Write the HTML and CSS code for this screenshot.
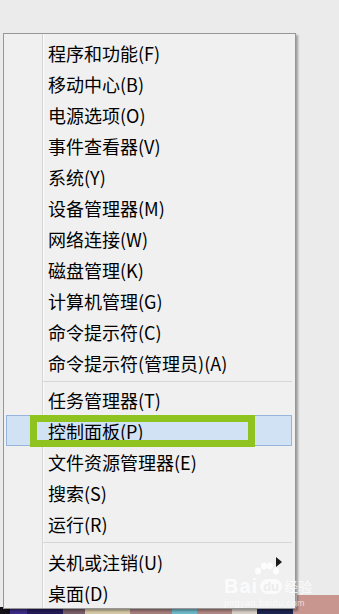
FILE: index.html
```html
<!DOCTYPE html>
<html lang="zh-CN">
<head>
<meta charset="utf-8">
<title>Win+X 菜单</title>
<link rel="stylesheet" href="styles.css">
</head>
<body>
<div class="desktop">
  <div class="desk-fill"></div>
  <div class="desk-corner"><div class="pink-block"></div></div>
  <div class="taskbar">
    <span class="seg s1"></span><span class="seg s2"></span><span class="seg s3"></span><span class="seg s4"></span><span class="seg s5"></span><span class="seg s6"></span><span class="seg s7"></span><span class="seg s8"></span><span class="seg s9"></span><span class="seg s10"></span><span class="seg s11"></span>
  </div>

  <div class="menu">
    <div class="item">程序和功能(F)</div>
    <div class="item">移动中心(B)</div>
    <div class="item">电源选项(O)</div>
    <div class="item">事件查看器(V)</div>
    <div class="item">系统(Y)</div>
    <div class="item">设备管理器(M)</div>
    <div class="item">网络连接(W)</div>
    <div class="item">磁盘管理(K)</div>
    <div class="item">计算机管理(G)</div>
    <div class="item">命令提示符(C)</div>
    <div class="item">命令提示符(管理员)(A)</div>
    <div class="sep sep-a"></div>
    <div class="item">任务管理器(T)</div>
    <div class="item item-hover">控制面板(P)<span class="mark"></span></div>
    <div class="item">文件资源管理器(E)</div>
    <div class="item">搜索(S)</div>
    <div class="item">运行(R)</div>
    <div class="sep sep-b"></div>
    <div class="item item-sub">关机或注销(U)<span class="arrow"></span></div>
    <div class="item">桌面(D)</div>
  </div>

  <div class="watermark">
    <svg class="paw" width="26" height="14" viewBox="0 0 26 14">
      <ellipse cx="4" cy="9" rx="3" ry="3.5" fill="rgba(255,255,255,0.85)"/>
      <ellipse cx="10" cy="4" rx="3" ry="3.5" fill="rgba(255,255,255,0.85)"/>
      <ellipse cx="16" cy="4" rx="3" ry="3.5" fill="rgba(255,255,255,0.85)"/>
      <ellipse cx="22" cy="9" rx="3" ry="3.5" fill="rgba(255,255,255,0.85)"/>
    </svg>
    <div class="wm-line"><span class="wm-bai">Bai</span><span class="wm-du">du</span><span class="wm-jy">经验</span></div>
    <div class="wm-url">jingyan.baidu.com</div>
  </div>
</div>
</body>
</html>
```

FILE: styles.css
```css
html, body {
  margin: 0;
  padding: 0;
}
body {
  width: 339px;
  height: 614px;
  overflow: hidden;
  font-family: "Noto Sans CJK SC", "Noto Sans", sans-serif;
}
.desktop {
  position: relative;
  width: 339px;
  height: 614px;
  display: flex;
  flex-direction: column;
  background: #ebebeb;
}
.desk-fill {
  flex: 1;
}
.desk-corner {
  display: flex;
  justify-content: flex-end;
}
.pink-block {
  width: 42px;
  height: 12px;
  background: #c9958f;
}
.taskbar {
  height: 7px;
  display: flex;
}
.seg { display: block; height: 100%; }
.s1 { width: 10px; background: #141018; }
.s2 { width: 17px; background: #3b2b86; }
.s3 { width: 36px; background: #241a5a; }
.s4 { width: 22px; background: #7a5f68; }
.s5 { width: 45px; background: #d6c9a6; }
.s6 { width: 42px; background: #a57f7c; }
.s7 { width: 25px; background: #6fb8c8; }
.s8 { width: 35px; background: #b08885; }
.s9 { width: 25px; background: #d8d0c8; }
.s10 { width: 36px; background: #1e2450; }
.s11 { flex: 1; background: #c9958f; }

.menu {
  position: absolute;
  left: 3px;
  top: 33px;
  width: 291px;
  padding: 3px 0 0 0;
  background-color: #f0f0f0;
  background-image: linear-gradient(to right, transparent 38px, #d4d4d4 38px, #d4d4d4 39px, #fbfbfb 39px, #fbfbfb 40px, transparent 40px);
  border: 1px solid #979797;
  box-shadow: 2px 2px 2px rgba(0, 0, 0, 0.32);
  color: #000;
  font-size: 18px;
}
.item {
  position: relative;
  height: 31px;
  margin: 0 3px 0 2px;
  padding-left: 41px;
  display: flex;
  align-items: center;
  box-sizing: border-box;
  border: 1px solid transparent;
  white-space: nowrap;
  line-height: 1;
}
.item-hover {
  background: #d1e2f4;
  border-color: #97b4dc;
}
.mark {
  position: absolute;
  left: 23px;
  top: -1px;
  width: 225px;
  height: 32px;
  box-sizing: border-box;
  border: 7px solid #8fc31f;
}
.item-sub {
  justify-content: space-between;
  padding-right: 9px;
}
.arrow {
  width: 0;
  height: 0;
  border-left: 6px solid #1a1a1a;
  border-top: 5px solid transparent;
  border-bottom: 5px solid transparent;
}
.sep {
  margin: 0 3px 0 38px;
  box-sizing: border-box;
  border-bottom: 1px solid #d6d6d6;
}
.sep-a { height: 4px; margin-bottom: 2px; }
.sep-b { height: 4px; margin-bottom: 3px; }

.watermark {
  position: absolute;
  left: 224px;
  top: 562px;
  display: flex;
  flex-direction: column;
  align-items: flex-start;
  white-space: nowrap;
  pointer-events: none;
}
.paw {
  margin-left: 30px;
  display: block;
}
.wm-line {
  display: flex;
  align-items: center;
  gap: 2px;
  color: rgba(255, 255, 255, 0.8);
  font-family: "Liberation Sans", sans-serif;
  font-weight: bold;
  line-height: 1;
}
.wm-bai {
  font-size: 20px;
  letter-spacing: 1px;
}
.wm-du {
  font-size: 13px;
  background: rgba(255, 255, 255, 0.7);
  color: #ececec;
  border-radius: 8px;
  padding: 1px 3px;
}
.wm-jy {
  font-family: "Noto Sans CJK SC", sans-serif;
  font-size: 14px;
  font-weight: normal;
}
.wm-url {
  margin-top: 3px;
  font-family: "Liberation Sans", sans-serif;
  font-size: 9px;
  line-height: 1;
  color: rgba(255, 255, 255, 0.7);
  letter-spacing: 0.5px;
}
```
